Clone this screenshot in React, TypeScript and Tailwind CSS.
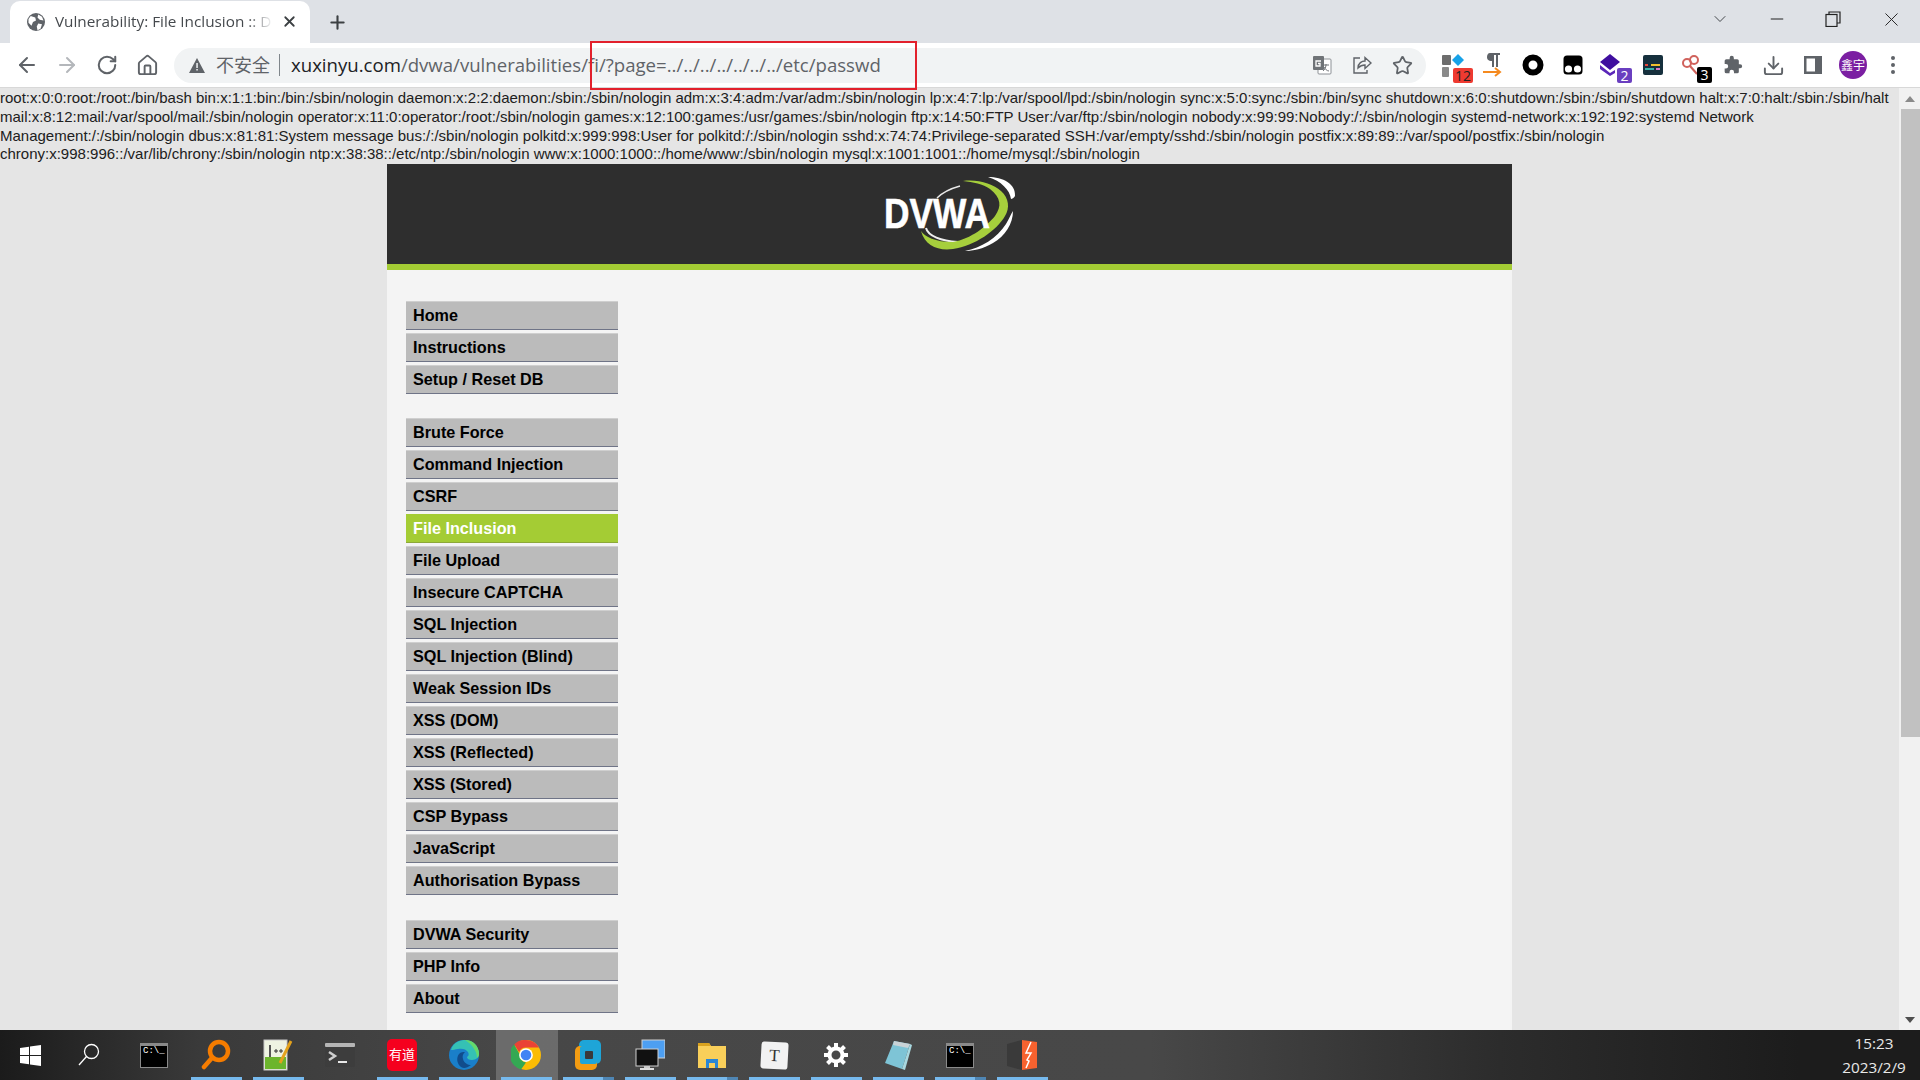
import React from "react";
import { ArrowLeft, ArrowRight, RotateCw, Home, Star, Plus, X, Minus, ChevronDown, Download } from "lucide-react";

const groups = [
  ["Home", "Instructions", "Setup / Reset DB"],
  ["Brute Force", "Command Injection", "CSRF", "File Inclusion", "File Upload", "Insecure CAPTCHA", "SQL Injection", "SQL Injection (Blind)", "Weak Session IDs", "XSS (DOM)", "XSS (Reflected)", "XSS (Stored)", "CSP Bypass", "JavaScript", "Authorisation Bypass"],
  ["DVWA Security", "PHP Info", "About"],
];

const passwd = [
  "root:x:0:0:root:/root:/bin/bash bin:x:1:1:bin:/bin:/sbin/nologin daemon:x:2:2:daemon:/sbin:/sbin/nologin adm:x:3:4:adm:/var/adm:/sbin/nologin lp:x:4:7:lp:/var/spool/lpd:/sbin/nologin sync:x:5:0:sync:/sbin:/bin/sync shutdown:x:6:0:shutdown:/sbin:/sbin/shutdown halt:x:7:0:halt:/sbin:/sbin/halt",
  "mail:x:8:12:mail:/var/spool/mail:/sbin/nologin operator:x:11:0:operator:/root:/sbin/nologin games:x:12:100:games:/usr/games:/sbin/nologin ftp:x:14:50:FTP User:/var/ftp:/sbin/nologin nobody:x:99:99:Nobody:/:/sbin/nologin systemd-network:x:192:192:systemd Network",
  "Management:/:/sbin/nologin dbus:x:81:81:System message bus:/:/sbin/nologin polkitd:x:999:998:User for polkitd:/:/sbin/nologin sshd:x:74:74:Privilege-separated SSH:/var/empty/sshd:/sbin/nologin postfix:x:89:89::/var/spool/postfix:/sbin/nologin",
  "chrony:x:998:996::/var/lib/chrony:/sbin/nologin ntp:x:38:38::/etc/ntp:/sbin/nologin www:x:1000:1000::/home/www:/sbin/nologin mysql:x:1001:1001::/home/mysql:/sbin/nologin",
];

function Logo() {
  return (
    <svg width="133" height="76" viewBox="0 0 133 76">
      <path d="M77 10C66 13 60 16 54 22" fill="none" stroke="#e8e8e8" strokeWidth="1.5" />
      <path d="M43 52C45 60 58 65 75 66" fill="none" stroke="#f0f0f0" strokeWidth="2" />
      <path d="M80 5C95 3 110 8 118 15C126 22 127 32 122 40C114 54 92 70 70 73C55 75 42 70 38 55C42 61 52 66 70 66C88 63 104 50 112 40C119 30 118 22 107 13C100 8 90 6 80 5Z" fill="#a6cf3c" />
      <path d="M105 1C120 1 133 8 132 20C131 22 129 23 128 23C127 14 118 5 105 1Z" fill="#fff" />
      <path d="M82 75C98 72 114 62 123 48C126 43 128 38 130 35C130 48 122 60 110 67C100 73 90 75 82 75Z" fill="#fff" />
      <text x="1" y="52" textLength="106" lengthAdjust="spacingAndGlyphs" fontFamily="'Liberation Sans', sans-serif" fontWeight="700" fontSize="43" fill="#fff" stroke="#fff" strokeWidth="0.6">DVWA</text>
    </svg>
  );
}

function Globe() {
  return (
    <svg width="18" height="18" viewBox="0 0 24 24">
      <circle cx="12" cy="12" r="12" fill="#5f6368" />
      <path d="M5 4l6 2 1 4-4 2-2 5-4-4 0-5zM15 14l5 1-2 6-4 2-1-5zM15 2l5 3 2 5-5-1-3-3z" fill="#fff" />
    </svg>
  );
}

function Slot({ children }: { children: React.ReactNode }) {
  return <div className="w-10 h-10 flex items-center justify-center relative shrink-0">{children}</div>;
}

function Badge({ children, bg }: { children: React.ReactNode; bg: string }) {
  return (
    <span className={`absolute flex items-center justify-center text-[14px] leading-none rounded-[2px] ${bg}`}>
      {children}
    </span>
  );
}

function Extensions() {
  return (
    <div className="flex items-center ml-[7px]">
      <Slot>
        <svg width="26" height="26" viewBox="0 0 26 26">
          <rect x="2" y="3" width="9" height="10" rx="1" fill="#6d6d6d" />
          <rect x="2" y="15" width="7" height="10" rx="1" fill="#8a8a8a" />
          <path d="M18 2l6 6-6 6-6-6z" fill="#17a2e8" />
        </svg>
        <Badge bg="bg-[#ee3a31] text-[#222] w-[20px] h-[15px] left-[20px] top-[23px]">12</Badge>
      </Slot>
      <Slot>
        <svg width="26" height="28" viewBox="0 0 26 28">
          <path d="M8 2h12v2h-2v12h-2V4h-2v12h-2V10c-4 0-5-2-5-4s1-4 3-4z" fill="#5f6368" />
          <path d="M3 21h16M15 17l5 4-5 4" fill="none" stroke="#f58a1f" strokeWidth="2" />
        </svg>
      </Slot>
      <Slot>
        <svg width="22" height="22" viewBox="0 0 22 22">
          <circle cx="11" cy="11" r="7.5" fill="none" stroke="#000" strokeWidth="6" />
        </svg>
      </Slot>
      <Slot>
        <svg width="20" height="20" viewBox="0 0 20 20">
          <rect x="0.5" y="0.5" width="19" height="19" rx="3.5" fill="#000" />
          <circle cx="5.5" cy="14" r="3.6" fill="#fff" />
          <circle cx="14.5" cy="14" r="3.6" fill="#fff" />
        </svg>
      </Slot>
      <Slot>
        <svg width="22" height="24" viewBox="0 0 22 24" className="-ml-1">
          <path d="M10 1l10 8-10 8L0 9z" fill="#3f0e9f" />
          <path d="M0 12l10 8 5-3v3l-5 3L0 16z" fill="#5a26b8" />
        </svg>
        <Badge bg="bg-[#6a3fc0] text-white w-[15px] h-[15px] left-[24px] top-[23px]">2</Badge>
      </Slot>
      <Slot>
        <svg width="20" height="20" viewBox="0 0 20 20">
          <rect width="20" height="20" rx="2" fill="#16303d" />
          <rect x="2" y="9" width="3" height="2" fill="#e6483d" />
          <rect x="8" y="9" width="9" height="2" fill="#efc12f" />
          <rect x="2" y="13" width="9" height="2" fill="#3ab5a8" />
          <rect x="13" y="13" width="4" height="2" fill="#d979c9" />
        </svg>
      </Slot>
      <Slot>
        <svg width="22" height="22" viewBox="0 0 22 22" fill="none" stroke="#d0625c" strokeWidth="2" className="-ml-1">
          <circle cx="7" cy="9" r="4" />
          <circle cx="14" cy="6" r="4" />
          <path d="M10 12l7 8" />
        </svg>
        <Badge bg="bg-black text-white w-[15px] h-[16px] left-[24px] top-[22px]">3</Badge>
      </Slot>
      <Slot>
        <svg width="20" height="20" viewBox="0 0 24 24" fill="#5f6368">
          <path d="M20.5 11H19V7a2 2 0 0 0-2-2h-4V3.5a2.5 2.5 0 0 0-5 0V5H4a2 2 0 0 0-2 2v3.8h1.5a2.7 2.7 0 0 1 0 5.4H2V20a2 2 0 0 0 2 2h3.8v-1.5a2.7 2.7 0 0 1 5.4 0V22H17a2 2 0 0 0 2-2v-4h1.5a2.5 2.5 0 0 0 0-5z" />
        </svg>
      </Slot>
      <Slot><Download size={23} color="#5f6368" strokeWidth={2} /></Slot>
      <Slot>
        <svg width="20" height="20" viewBox="0 0 20 20">
          <path d="M1 1h18v18H1zM3.500 3.500v13H12v-13z" fill="#5f6368" fillRule="evenodd" />
        </svg>
      </Slot>
      <Slot>
        <div className="w-7 h-7 rounded-full bg-[#7b1fa2] text-white text-[12px] flex items-center justify-center whitespace-nowrap [font-family:'Noto_Sans_CJK_SC',sans-serif]">鑫宇</div>
      </Slot>
      <Slot>
        <svg width="4" height="18" viewBox="0 0 4 18" fill="#5f6368">
          <circle cx="2" cy="2" r="2" /><circle cx="2" cy="9" r="2" /><circle cx="2" cy="16" r="2" />
        </svg>
      </Slot>
    </div>
  );
}

function Browser() {
  return (
    <div className="shrink-0 [font-family:'Open_Sans','Noto_Sans_CJK_SC',sans-serif]">
      <div className="h-[43px] bg-[#dee1e6] flex items-end pl-[10px]">
        <div className="w-[300px] h-[42px] bg-white rounded-t-[10px] flex items-center pl-[17px] pr-[12px] pb-[1px]">
          <Globe />
          <span className="ml-[10px] w-[218px] overflow-hidden whitespace-nowrap text-[15.300px] text-[#45494d] [mask-image:linear-gradient(to_right,black_88%,transparent)]">
            Vulnerability: File Inclusion :: D
          </span>
          <X size={17} color="#3c4043" strokeWidth={2.5} className="ml-[8px]" />
        </div>
        <div className="h-[42px] flex items-center ml-[17px]">
          <Plus size={21} color="#3c4043" strokeWidth={2.4} />
        </div>
        <div className="ml-auto self-start flex items-center h-[38px]">
          <ChevronDown size={20} color="#45494d" strokeWidth={1.2} className="mr-[37px]" />
          <Minus size={20} color="#222" strokeWidth={1.2} className="mr-[38px]" />
          <svg width="16" height="16" viewBox="0 0 16 16" fill="none" stroke="#222" strokeWidth="1.2" className="mr-[39px]">
            <rect x="1" y="3.500" width="11" height="12" /><path d="M4 3.500V1h11v11h-3" />
          </svg>
          <X size={23} color="#222" strokeWidth={1} className="mr-[17px]" />
        </div>
      </div>
      <div className="h-[45px] bg-white border-b border-[#d8d8d8] flex items-center relative">
        <div className="flex items-center pl-[15px] gap-[16px]">
          <ArrowLeft size={24} color="#5f6368" strokeWidth={2} />
          <ArrowRight size={24} color="#b4b7bb" strokeWidth={2} />
          <RotateCw size={22} color="#5f6368" strokeWidth={2.2} className="mx-[1px]" />
          <Home size={23} color="#5f6368" strokeWidth={2} className="ml-[1px]" />
        </div>
        <div className="ml-[15px] w-[1252px] h-[35px] bg-[#f1f3f4] rounded-full flex items-center pl-[15px] pr-[4px]">
          <svg width="16" height="15" viewBox="0 0 16 15"><path d="M8 0l8 15H0z" fill="#5f6368" /><rect x="7.300" y="5" width="1.500" height="5" fill="#f1f3f4" /><rect x="7.300" y="11" width="1.500" height="1.500" fill="#f1f3f4" /></svg>
          <span className="ml-[11px] text-[18px] text-[#5f6368] whitespace-nowrap">不安全</span>
          <span className="ml-[9px] w-px h-[22px] bg-[#80868b]" />
          <span className="ml-[11px] text-[18.600px] whitespace-nowrap text-[#5f6368]">
            <span className="text-[#202124]">xuxinyu.com</span>/dvwa/vulnerabilities/fi/?page=../../../../../../../etc/passwd
          </span>
          <div className="ml-auto flex items-center">
            <Slot>
              <svg width="20" height="20" viewBox="0 0 20 20">
                <rect x="6" y="4" width="13" height="15" rx="1" fill="#fff" stroke="#8d9196" />
                <rect x="1" y="1" width="11" height="14" rx="1" fill="#6f7377" />
                <path d="M9 6H4v5h4V8.500H6" fill="none" stroke="#fff" strokeWidth="1.300" />
                <path d="M11 10h6M14 9v1c0 3-2 5-3 6M12 12c1 2 3 4 5 4" fill="none" stroke="#6f7377" strokeWidth="1" />
              </svg>
            </Slot>
            <Slot>
              <svg width="20" height="20" viewBox="0 0 20 20" fill="none" stroke="#5f6368" strokeWidth="1.400">
                <path d="M6 13c0-5 4-7 7-7V2.500l6 5.500-6 5.500V10c-3 0-5 1-7 3z" /><path d="M8 3H2v15h13v-3" />
              </svg>
            </Slot>
            <Slot><Star size={21} color="#5f6368" strokeWidth={2} /></Slot>
          </div>
        </div>
        <Extensions />
        <div className="absolute left-[590px] top-[-2px] w-[327px] h-[49px] border-2 border-[#e2202c]" />
      </div>
    </div>
  );
}

function Menu() {
  return (
    <div className="flex flex-col gap-[24px]">
      {groups.map((g, i) => (
        <ul key={i} className={`flex flex-col gap-[3px] ${i === 2 ? "mt-[1px]" : ""}`}>
          {g.map((item) => {
            const active = item === "File Inclusion";
            return (
              <li
                key={item}
                className={`w-[212px] h-[29px] pl-[7px] flex items-center font-bold text-[16.200px] border-t border-b ${
                  active ? "bg-[#a4cc34] text-white border-t-[#a4cc34] border-b-[#8ca838]" : "bg-[#bbbbbb] text-black border-t-[#cfcfcf] border-b-[#6f7487]"
                }`}
              >
                {item}
              </li>
            );
          })}
        </ul>
      ))}
    </div>
  );
}

function Page() {
  return (
    <div className="flex-1 min-h-0 flex">
      <div className="flex-1 min-w-0 bg-[#e5e5e5] overflow-hidden flex flex-col [font-family:'Liberation_Sans',Arial,sans-serif]">
        <div className="pt-[1px] text-[15px] leading-[18.750px] text-[#202020] whitespace-nowrap shrink-0">
          {passwd.map((l) => (<div key={l}>{l}</div>))}
        </div>
        <div className="ml-[387px] w-[1125px] flex-1 bg-[#f4f4f4] flex flex-col">
          <div className="h-[100px] bg-[#2e2e2e] flex items-center justify-center shrink-0">
            <Logo />
          </div>
          <div className="h-[6px] bg-[#a4cc34] shrink-0" />
          <div className="pt-[31px] pl-[19px]"><Menu /></div>
        </div>
      </div>
      <div className="w-[21px] bg-[#f1f1f1] flex flex-col items-stretch shrink-0">
        <div className="h-[21px] flex items-center justify-center">
          <div className="w-0 h-0 border-x-[5px] border-x-transparent border-b-[6px] border-b-[#8a8a8a]" />
        </div>
        <div className="h-[628px] bg-[#c1c1c1] ml-[2px]" />
        <div className="flex-1" />
        <div className="h-[21px] flex items-center justify-center">
          <div className="w-0 h-0 border-x-[5px] border-x-transparent border-t-[6px] border-t-[#505050]" />
        </div>
      </div>
    </div>
  );
}

function TaskItem({ children, line, split, active }: { children?: React.ReactNode; line?: boolean; split?: boolean; active?: boolean }) {
  return (
    <div className={`w-[62px] h-[50px] shrink-0 flex items-center justify-center pr-[2px] relative ${active ? "bg-white/20" : ""}`}>
      {children}
      {line && (
        <div className="absolute bottom-0 left-[5px] right-[6px] h-[3px] flex">
          <div className="flex-1 bg-[#76b9ed]" />
          {split && <div className="w-[11px] bg-[#4f86b4]" />}
        </div>
      )}
    </div>
  );
}

function Cmd() {
  return (
    <div className="w-[28px] h-[25px] bg-black border border-[#8a8a8a] border-t-[3px] text-[9px] leading-[11px] text-white pl-[2px] font-mono overflow-hidden">C:\_</div>
  );
}

function Taskbar() {
  return (
    <div className="h-[50px] shrink-0 flex items-center bg-[linear-gradient(to_right,#1b1b1b_0px,#3a3a3a_200px,#474747_500px,#484848_1150px,#2c2c2c_1500px,#1c1c1c_1800px)] [font-family:'Open_Sans','Noto_Sans_CJK_SC',sans-serif]">
      <TaskItem>
        <svg width="21" height="21" viewBox="0 0 21 21" fill="#fff">
          <path d="M0 3l9-1.300V10H0zM10 1.500L21 0v10H10zM0 11h9v8.300L0 18zM10 11h11v10l-11-1.500z" />
        </svg>
      </TaskItem>
      <TaskItem>
        <svg width="22" height="24" viewBox="0 0 22 24" fill="none" stroke="#fff" strokeWidth="1.300" className="-ml-[6px]">
          <circle cx="13.500" cy="8.500" r="7" /><path d="M8.500 13.500L1 22" />
        </svg>
      </TaskItem>
      <TaskItem><Cmd /></TaskItem>
      <TaskItem line>
        <svg width="30" height="32" viewBox="0 0 30 32" fill="none" stroke="#f57c00" strokeWidth="4.500">
          <circle cx="18" cy="12" r="9" /><path d="M10 20l-7 8" strokeLinecap="round" />
        </svg>
      </TaskItem>
      <TaskItem line>
        <svg width="30" height="32" viewBox="0 0 30 32">
          <rect x="1" y="1" width="23" height="30" fill="#eef3e2" stroke="#c8c8c8" />
          <rect x="2" y="18" width="21" height="12" fill="#6cb52d" />
          <path d="M7 6v12" stroke="#555" strokeWidth="2" />
          <path d="M11 12h4M13 10v4M16 12h4M18 10v4" stroke="#333" strokeWidth="1" />
          <path d="M28 2L17 24" stroke="#e4a21c" strokeWidth="3" />
        </svg>
      </TaskItem>
      <TaskItem>
        <svg width="30" height="24" viewBox="0 0 30 24">
          <rect width="30" height="24" rx="2" fill="#3d3d3d" />
          <rect width="30" height="4" rx="1" fill="#b5b5b5" />
          <path d="M4 9l6 4-6 4" fill="none" stroke="#cfcfcf" strokeWidth="2.500" />
          <path d="M13 19h9" stroke="#e8e8e8" strokeWidth="2" />
        </svg>
      </TaskItem>
      <TaskItem line>
        <div className="w-[30px] h-[32px] rounded-[5px] bg-[#f5001e] text-white text-[13px] flex items-center justify-center whitespace-nowrap">有道</div>
      </TaskItem>
      <TaskItem line>
        <svg width="30" height="32" viewBox="0 0 30 32">
          <circle cx="15" cy="16" r="15" fill="#1a7fc9" />
          <path d="M2 11C4 3 12 1 16 1c8 0 14 6 14 14 0 3-3 6-7 6-3 0-5-1-5-3 2-1 2-3 1-5-2-3-6-4-10-3-3 .5-5 1-7 1z" fill="#35c1b4" />
          <path d="M16 1c8 0 14 6 14 14 0 2-1 3-2 4 0-6-4-13-12-18z" fill="#65d86b" />
          <path d="M12 28c-4-3-5-9-2-13 2-2 4-2 6-2-2 2-3 4-2 7 1 4 5 6 8 6-4 3-7 4-10 2z" fill="#114c8c" />
        </svg>
      </TaskItem>
      <TaskItem line active>
        <svg width="30" height="30" viewBox="0 0 48 48">
          <circle cx="24" cy="24" r="24" fill="#fbbc05" />
          <path d="M24 0a24 24 0 0 1 20.800 12H24a12 12 0 0 0-11 7L5 7A24 24 0 0 1 24 0z" fill="#ea4335" />
          <path d="M5 7l9 16a12 12 0 0 0 10 13l-8 11A24 24 0 0 1 5 7z" fill="#34a853" />
          <circle cx="24" cy="24" r="11" fill="#fff" /><circle cx="24" cy="24" r="8.500" fill="#4285f4" />
        </svg>
      </TaskItem>
      <TaskItem line split>
        <svg width="28" height="32" viewBox="0 0 28 32">
          <rect x="5" y="1" width="22" height="24" rx="5" fill="#1ea5d8" />
          <rect x="1" y="7" width="22" height="24" rx="5" fill="#f39c12" />
          <rect x="6" y="7" width="17" height="18" rx="2" fill="#1ea5d8" />
          <rect x="11" y="12" width="8" height="8" rx="1" fill="#3a3a3a" />
        </svg>
      </TaskItem>
      <TaskItem line>
        <svg width="30" height="32" viewBox="0 0 30 32">
          <rect x="7" y="1" width="23" height="18" fill="#4d9ff2" stroke="#d0d0d0" />
          <rect x="1" y="10" width="22" height="17" fill="#111" stroke="#d0d0d0" />
          <rect x="9" y="27" width="6" height="3" fill="#ccc" /><rect x="5" y="29" width="14" height="2" fill="#ddd" />
        </svg>
      </TaskItem>
      <TaskItem line split>
        <svg width="28" height="25" viewBox="0 0 28 25">
          <path d="M0 0h11l2 3h15v22H0z" fill="#f9cf5a" /><path d="M0 0h11l2 3H0z" fill="#d9a21f" />
          <path d="M8 25v-9h12v9h-3v-5h-6v5z" fill="#2a86d4" />
        </svg>
      </TaskItem>
      <TaskItem line>
        <div className="w-[27px] h-[27px] bg-[#f2f2f2] rounded-[3px] rotate-3 flex items-center justify-center text-[17px] text-[#333] [font-family:'Liberation_Serif',serif]">T</div>
      </TaskItem>
      <TaskItem line>
        <svg width="24" height="24" viewBox="0 0 24 24" fill="none" stroke="#fff" strokeWidth="4">
          <circle cx="12" cy="12" r="6.500" />
          <path d="M12 0v5M12 19v5M0 12h5M19 12h5M3.500 3.500l3.500 3.500M17 17l3.500 3.500M3.500 20.500L7 17M17 7l3.500-3.500" />
        </svg>
      </TaskItem>
      <TaskItem line>
        <svg width="28" height="30" viewBox="0 0 28 30">
          <path d="M10 1l16 3-8 25-17-6z" fill="#7ec4d6" /><path d="M26 4l2 1-7 25-3-1z" fill="#a8d8e0" />
          <path d="M10 1l16 3-2 4-15-3z" fill="#c9d2d6" />
        </svg>
      </TaskItem>
      <TaskItem line split><Cmd /></TaskItem>
      <TaskItem line>
        <svg width="30" height="32" viewBox="0 0 30 32">
          <path d="M0 5l15-4v30L0 27z" fill="#3a3a3a" />
          <path d="M15 1l15 2v26l-15 2z" fill="#f7622f" />
          <path d="M24 3l-5 11h5l-4 7 2 1-3 7" fill="none" stroke="#fff" strokeWidth="1.500" />
        </svg>
      </TaskItem>
      <div className="ml-auto w-[92px] text-center text-[15.300px] leading-[24px] text-[#e8e8e8]">
        <div>15:23</div>
        <div>2023/2/9</div>
      </div>
    </div>
  );
}

export default function App() {
  return (
    <div className="w-[1920px] h-[1080px] overflow-hidden flex flex-col">
      <Browser />
      <Page />
      <Taskbar />
    </div>
  );
}
